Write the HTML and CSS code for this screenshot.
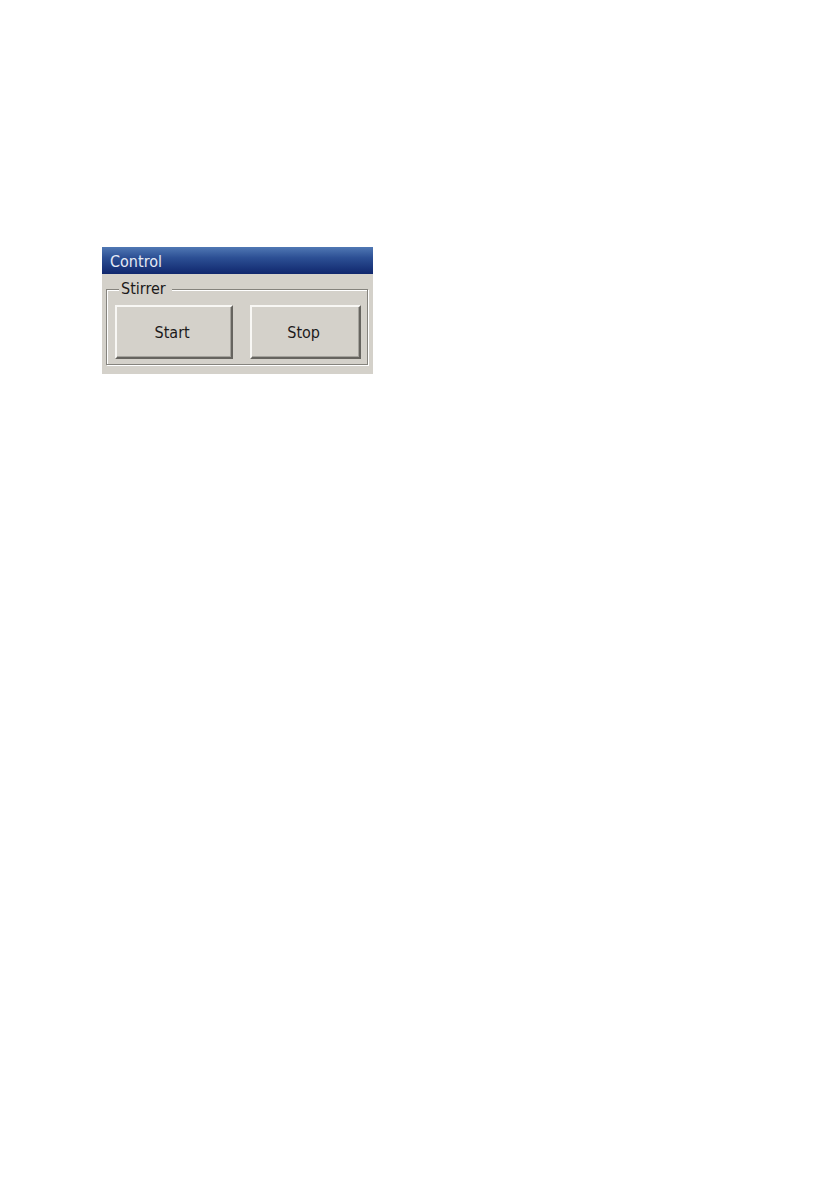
FILE: index.html
```
<!DOCTYPE html>
<html lang="en">
<head>
    <meta charset="utf-8">
    <title>Control</title>
    <link rel="stylesheet" href="styles.css">
</head>
<body>
    <div class="window">
        <div class="title-bar">Control</div>
        <fieldset class="group">
            <legend>Stirrer</legend>
            <div class="buttons">
                <button type="button" class="start">Start</button>
                <button type="button" class="stop">Stop</button>
            </div>
        </fieldset>
    </div>
</body>
</html>
```

FILE: styles.css
```
body {
    margin: 0;
    padding: 247px 102px 0;
    background: #fff;
    color: #1c1a1a;
    font-family: "DejaVu Sans Condensed", "Noto Sans", sans-serif;
    font-size: 16px;
}

.window {
    max-width: 271px;
    padding-bottom: 9px;
    background: #d4d1ca;
}

.title-bar {
    padding: 2px 8px 0;
    margin-bottom: 6px;
    background: linear-gradient(#5078b4, #2c4f94 40%, #10276d);
    color: #e6ebf5;
    line-height: 25px;
}

/* Etched frame: dark line with a white line below and to the right of it */
.group {
    min-width: 0;
    margin: 0 5px 0 4px;
    padding: 7px 6px 5px 8px;
    border: 1px solid #85837d;
    box-shadow: inset 1px 1px #fff, 1px 1px #fff;
}

.group legend {
    margin-left: 4px;
    padding: 0 6px 0 2px;
    background: #d4d1ca;
    line-height: 18px;
}

.buttons {
    display: flex;
    gap: 17px;
}

button {
    height: 54px;
    padding: 0 4px 0 0;
    border: 2px solid;
    border-color: #f8f7f4 #66645f #66645f #f8f7f4;
    background: #d4d1ca;
    box-shadow: inset -1px -1px #a5a39d;
    color: inherit;
    font: inherit;
}

button:active {
    border-color: #66645f #f8f7f4 #f8f7f4 #66645f;
    box-shadow: none;
}

.start {
    flex: 118;
}

.stop {
    flex: 110;
}
```
